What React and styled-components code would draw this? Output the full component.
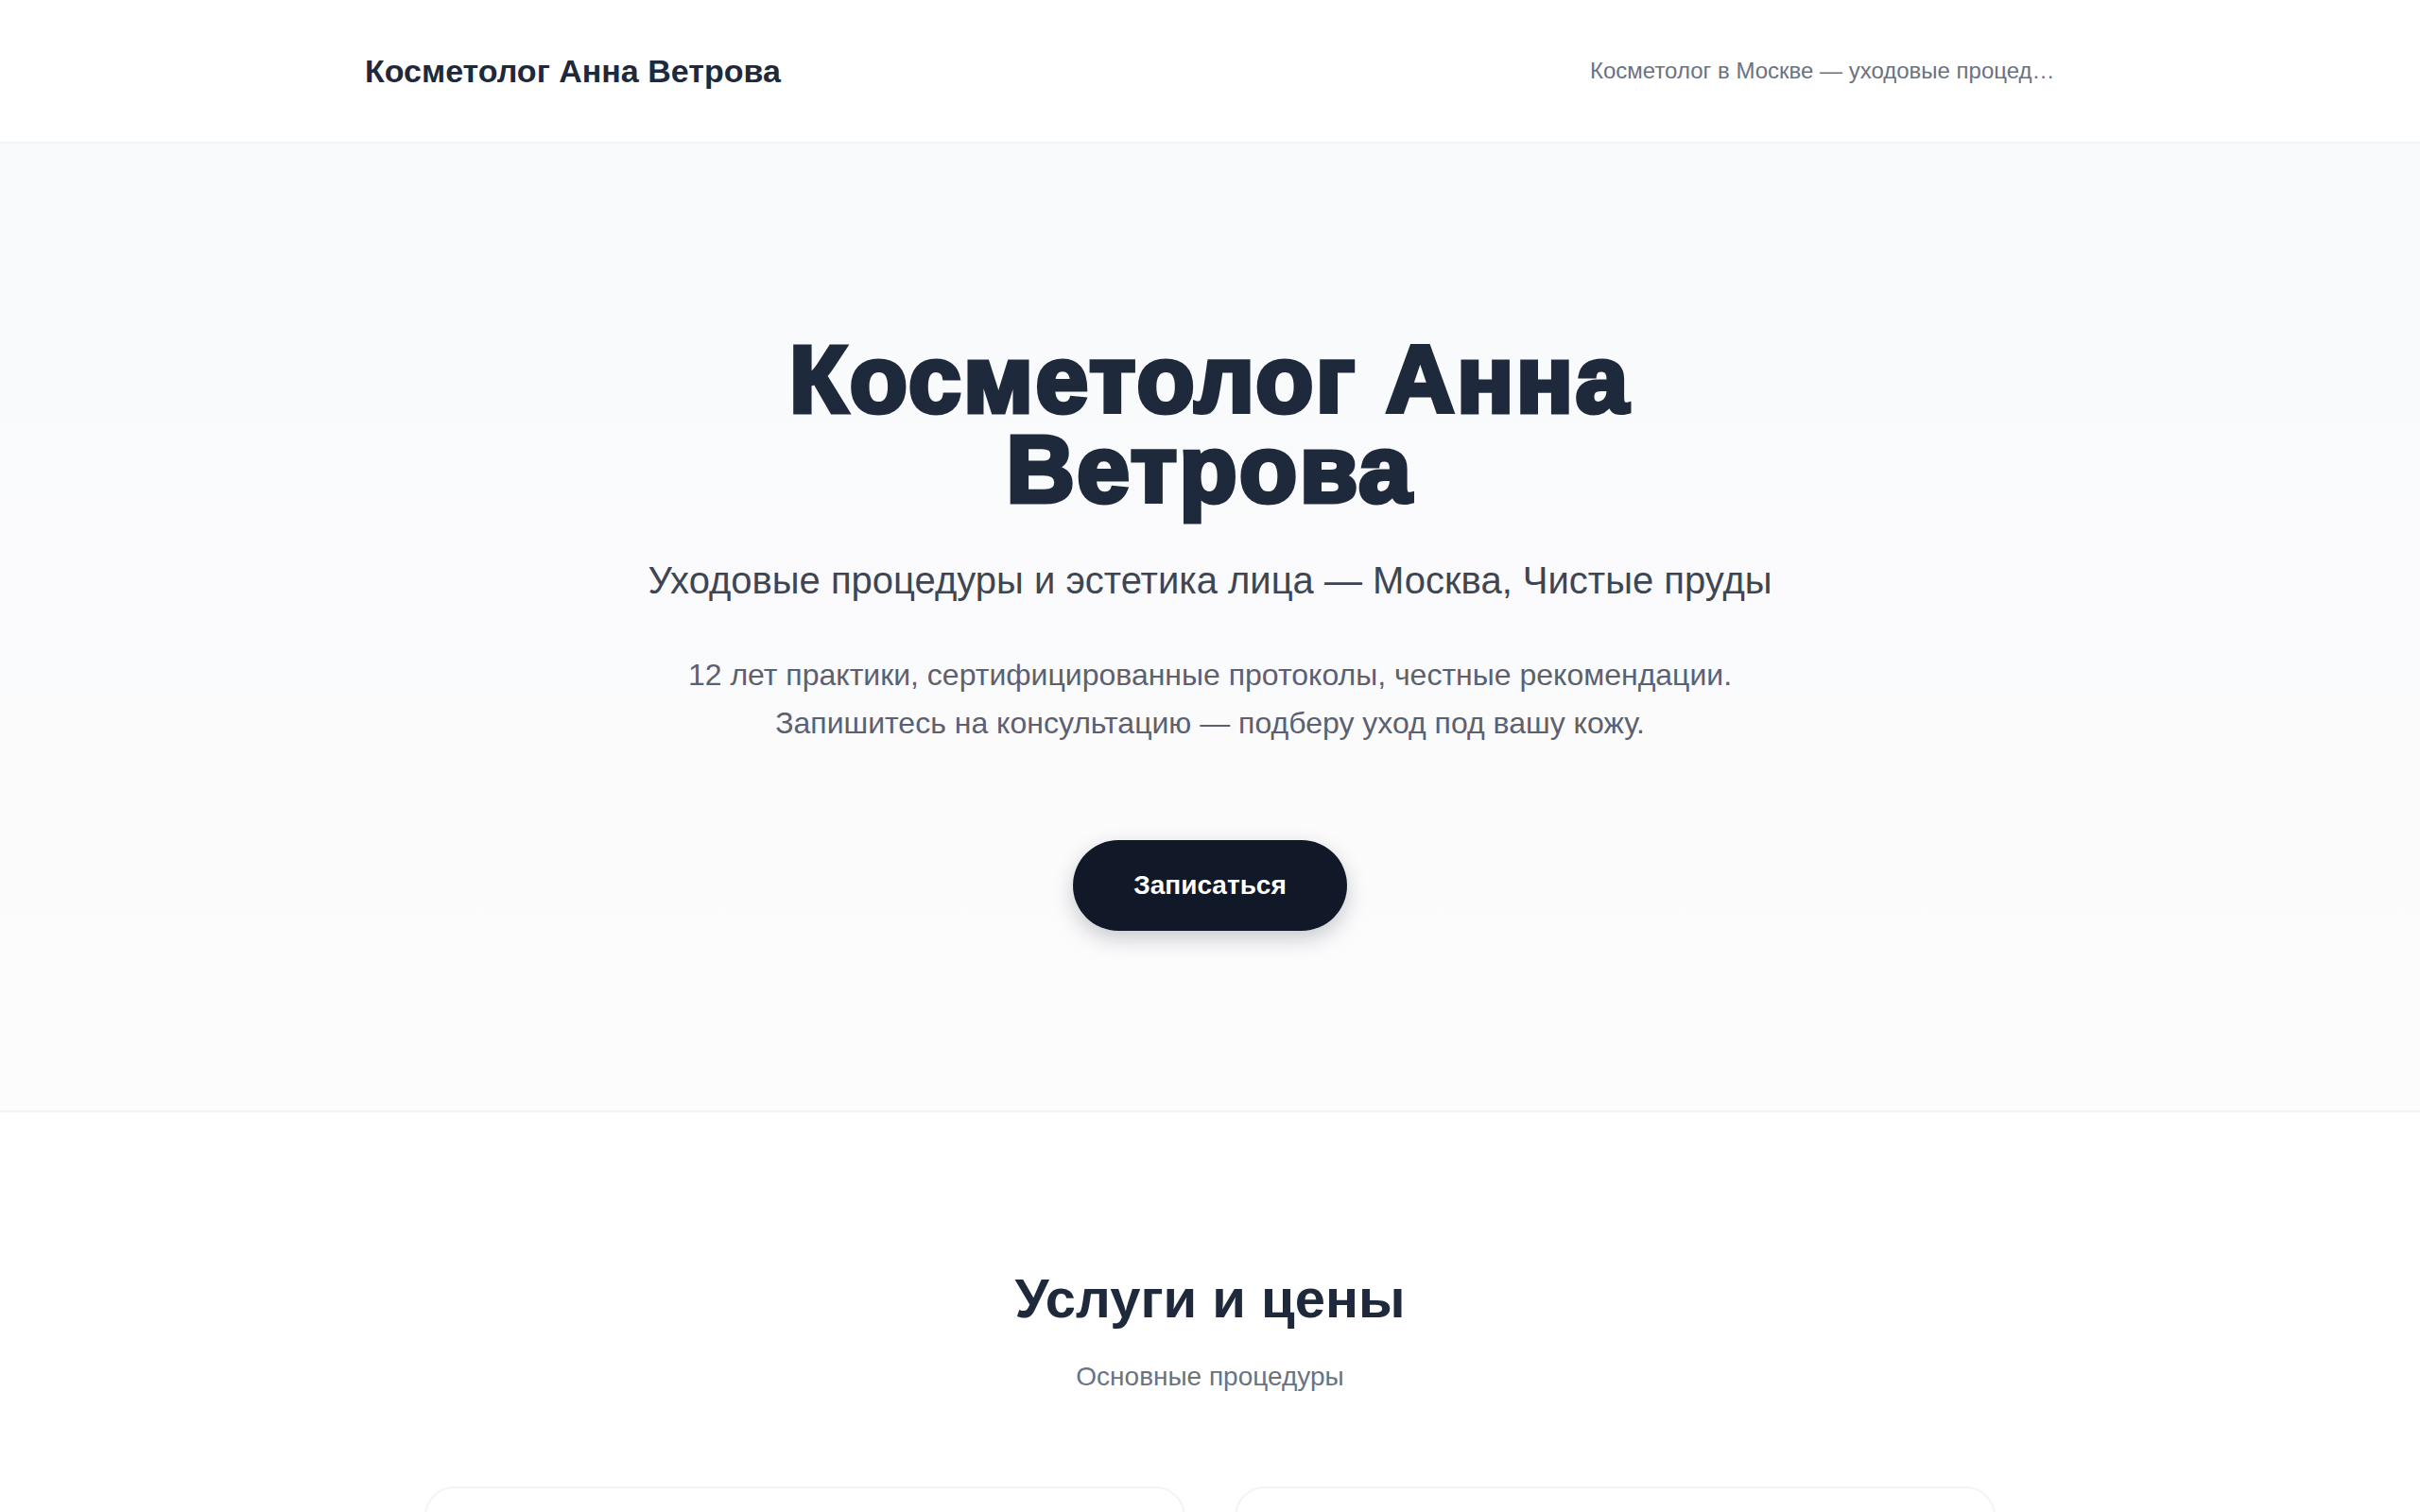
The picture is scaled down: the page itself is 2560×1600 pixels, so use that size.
import styled, { createGlobalStyle } from 'styled-components'

const GlobalStyle = createGlobalStyle`
    * { box-sizing: border-box; }
    body {
        margin: 0;
        background: #ffffff;
        font-family: "Liberation Sans", Arial, "Helvetica Neue", sans-serif;
        color: #1e293b;
    }
`

const StyledHeader = styled.header`
    height: 152px;
    background: #fff;
    border-bottom: 2px solid #f3f4f6;
`
const HeaderInner = styled.div`
    max-width: 1788px;
    height: 100%;
    margin: 0 auto;
    display: flex;
    align-items: center;
    justify-content: space-between;
`
const Brand = styled.div`
    font-size: 34px;
    font-weight: 700;
    color: #1e293b;
`
const Tagline = styled.div`
    max-width: 492px;
    font-size: 24px;
    color: #6b7280;
    white-space: nowrap;
    overflow: hidden;
    text-overflow: ellipsis;
`

const Hero = styled.section`
    padding: 202px 24px 190px;
    background: linear-gradient(180deg, #f8fafc 0%, #fbfbfc 60%, #fcfcfc 100%);
    border-bottom: 2px solid #f3f4f6;
    display: flex;
    flex-direction: column;
    align-items: center;
    text-align: center;
`
const Title = styled.h1`
    margin: 0;
    max-width: 1100px;
    font-size: 100px;
    line-height: 95px;
    font-weight: 900;
    letter-spacing: 0.025em;
    color: #1e293b;
    -webkit-text-stroke: 5px #1e293b;
`
const Subtitle = styled.p`
    margin: 44px 0 0;
    font-size: 40px;
    line-height: 53px;
    color: #3f4653;
`
const Lead = styled.p`
    margin: 48px 0 0;
    max-width: 1180px;
    font-size: 32px;
    line-height: 51px;
    color: #5b6170;
`
const CtaButton = styled.button`
    margin-top: 98px;
    height: 96px;
    padding: 0 64px;
    border: none;
    border-radius: 48px;
    background: #111827;
    color: #fff;
    font-family: inherit;
    font-size: 28px;
    font-weight: 700;
    box-shadow: 0 8px 22px rgba(15, 23, 42, 0.22);
    cursor: pointer;
`

const Services = styled.section`
    padding: 162px 24px 120px;
    display: flex;
    flex-direction: column;
    align-items: center;
`
const SectionTitle = styled.h2`
    margin: 0;
    font-size: 58px;
    line-height: 70px;
    font-weight: 700;
    color: #1e293b;
`
const SectionNote = styled.p`
    margin: 27px 0 0;
    font-size: 28px;
    line-height: 42px;
    color: #6b7280;
`
const CardGrid = styled.div`
    margin-top: 95px;
    width: 100%;
    max-width: 1662px;
    display: grid;
    grid-template-columns: 1fr 1fr;
    gap: 52px;
`
const Card = styled.div`
    background: #fff;
    border: 2px solid #f3f4f6;
    border-radius: 32px;
    padding: 48px;
    display: flex;
    flex-direction: column;
    gap: 16px;
`
const CardName = styled.h3`
    margin: 0;
    font-size: 34px;
    color: #1e293b;
`
const CardPrice = styled.div`
    font-size: 30px;
    font-weight: 700;
    color: #111827;
`
const CardText = styled.p`
    margin: 0;
    font-size: 26px;
    line-height: 1.6;
    color: #6b7280;
`

const services = [
    { name: 'Консультация косметолога', price: 'от 2 500 ₽', text: 'Диагностика кожи и план домашнего ухода.' },
    { name: 'Комплексный уход за лицом', price: 'от 6 000 ₽', text: 'Очищение, пилинг, маска и массаж.' },
]

const App = () => {
    return (
        <>
            <GlobalStyle />
            <StyledHeader>
                <HeaderInner>
                    <Brand>Косметолог Анна Ветрова</Brand>
                    <Tagline>Косметолог в Москве — уходовые процедуры и эстетика лица</Tagline>
                </HeaderInner>
            </StyledHeader>
            <Hero>
                <Title>Косметолог Анна Ветрова</Title>
                <Subtitle>Уходовые процедуры и эстетика лица — Москва, Чистые пруды</Subtitle>
                <Lead>12 лет практики, сертифицированные протоколы, честные рекомендации. Запишитесь на консультацию — подберу уход под вашу кожу.</Lead>
                <CtaButton>Записаться</CtaButton>
            </Hero>
            <Services>
                <SectionTitle>Услуги и цены</SectionTitle>
                <SectionNote>Основные процедуры</SectionNote>
                <CardGrid>
                    {services.map(s => (
                        <Card key={s.name}>
                            <CardName>{s.name}</CardName>
                            <CardPrice>{s.price}</CardPrice>
                            <CardText>{s.text}</CardText>
                        </Card>
                    ))}
                </CardGrid>
            </Services>
        </>
    )
}

export default App
